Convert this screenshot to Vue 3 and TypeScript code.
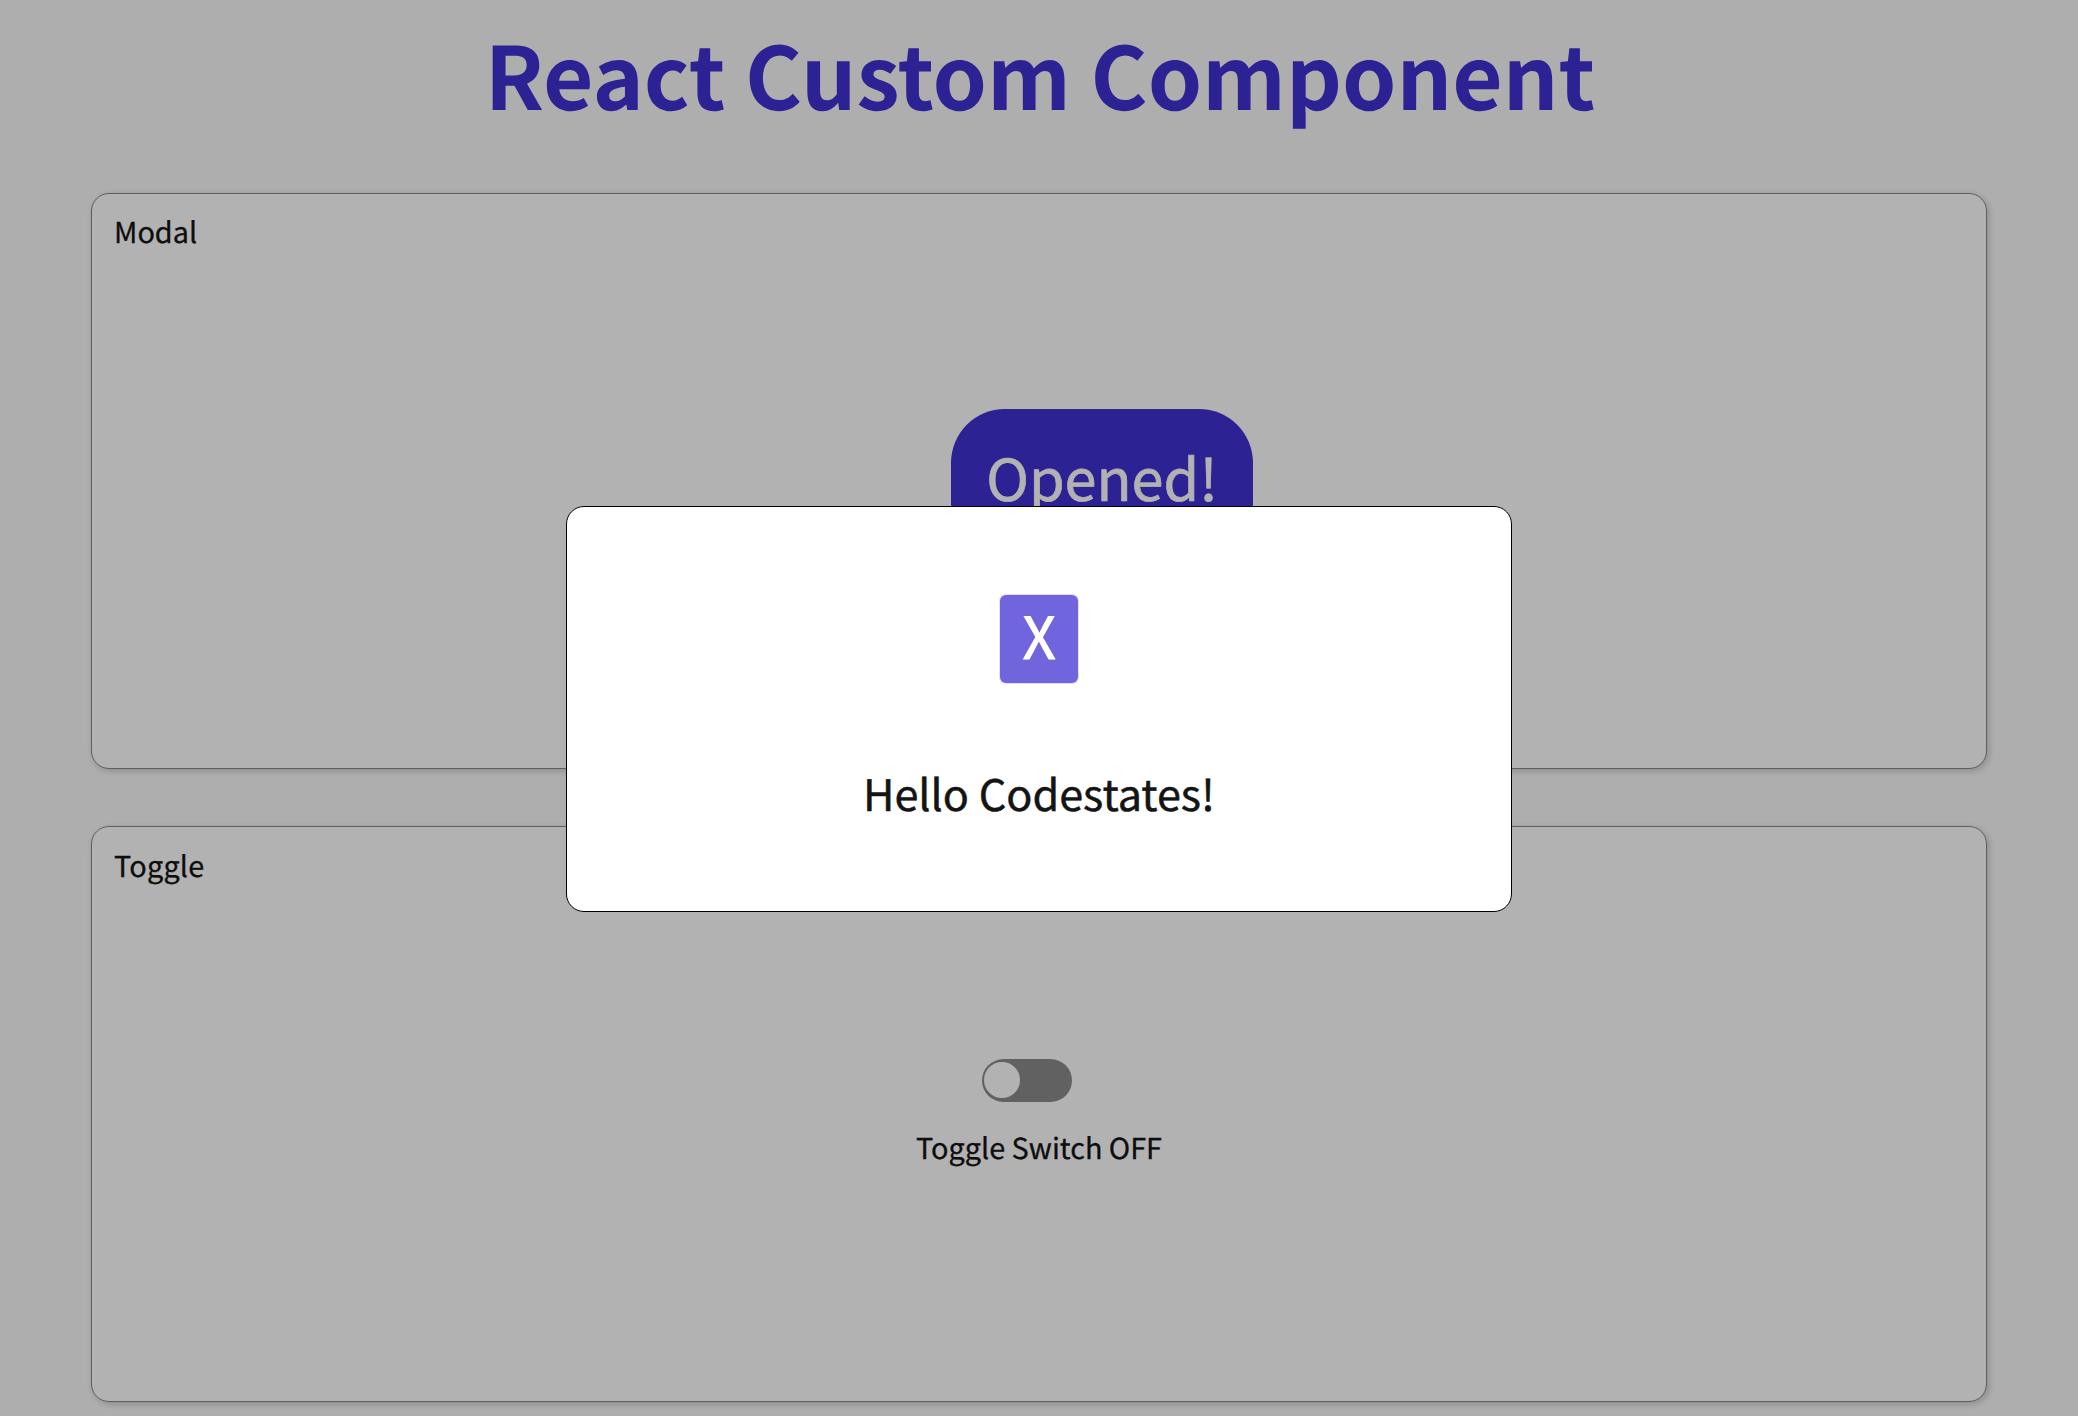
<script setup lang="ts">
import { ref } from 'vue'

const isOpen = ref(true)
const isOn = ref(false)
</script>

<template>
  <div class="page">
    <h1 class="title">React Custom Component</h1>
    <section class="card">
      <div class="label">Modal</div>
      <div class="modal-body">
        <button class="open-btn" @click="isOpen = true">Opened!</button>
      </div>
    </section>
    <section class="card">
      <div class="label low">Toggle</div>
      <div class="toggle-body">
        <div class="switch" :class="{ on: isOn }" @click="isOn = !isOn">
          <div class="knob"></div>
        </div>
        <div class="state">Toggle Switch {{ isOn ? 'ON' : 'OFF' }}</div>
      </div>
    </section>
    <div v-if="isOpen" class="backdrop">
      <div class="dialog">
        <button class="close-btn" @click="isOpen = false">X</button>
        <div class="message">Hello Codestates!</div>
      </div>
    </div>
  </div>
</template>

<style>
body {
  background: #fafafa;
  overflow: hidden;
}
</style>

<style scoped>
.page {
  box-sizing: border-box;
  height: 1416px;
  padding: 0 91px;
  overflow: hidden;
  font-family: 'Noto Sans CJK KR', sans-serif;
  text-rendering: geometricPrecision;
  color: #141414;
}
.title {
  margin: 0;
  height: 193px;
  line-height: 147px;
  font-size: 87px;
  font-weight: 700;
  text-align: center;
  text-indent: 2px;
  color: #4131d3;
}
.card {
  box-sizing: border-box;
  display: flex;
  flex-direction: column;
  height: 576px;
  margin-bottom: 57px;
  border: 1px solid #888;
  border-radius: 18px;
  background: #fff;
  box-shadow: 2px 2px 7px rgba(0, 0, 0, 0.2);
}
.label {
  box-sizing: border-box;
  padding: 16px 0 0 22px;
  height: 61px;
  line-height: 44px;
  font-size: 28.8px;
  -webkit-text-stroke: 0.3px currentColor;
}
.label.low {
  padding-top: 17px;
  letter-spacing: 0.2px;
}
.modal-body {
  display: flex;
  justify-content: center;
  padding: 154px 0 0 126px;
}
.open-btn {
  display: flex;
  justify-content: center;
  width: 302px;
  height: 148px;
  padding: 0;
  border: 0;
  border-radius: 54px;
  background: #4131d3;
  color: #fff;
  font: 400 57.6px/134px 'Noto Sans CJK KR', sans-serif;
  text-rendering: geometricPrecision;
  -webkit-text-stroke: 0.7px currentColor;
}
.toggle-body {
  display: flex;
  flex-direction: column;
  align-items: center;
  padding-top: 171px;
}
.switch {
  box-sizing: border-box;
  display: flex;
  width: 90px;
  height: 43px;
  margin-right: 24px;
  padding: 3px 2px 0;
  border-radius: 22px;
  background: #8b8b8b;
}
.switch.on {
  justify-content: flex-end;
  background: #4131d3;
}
.knob {
  width: 36px;
  height: 36px;
  border-radius: 50%;
  background: #fff;
}
.state {
  margin-top: 24px;
  line-height: 44px;
  font-size: 28.8px;
  -webkit-text-stroke: 0.3px currentColor;
}
.backdrop {
  position: fixed;
  inset: 0;
  display: flex;
  justify-content: center;
  align-items: center;
  padding-top: 2px;
  background: rgba(0, 0, 0, 0.3);
}
.dialog {
  box-sizing: border-box;
  display: flex;
  flex-direction: column;
  align-items: center;
  width: 946px;
  height: 406px;
  border: 1px solid #000;
  border-radius: 18px;
  background: #fff;
}
.close-btn {
  width: 78px;
  height: 88px;
  margin-top: 88px;
  padding: 0 0 10px;
  border: 0;
  border-radius: 6px;
  background: #7065dc;
  box-shadow: 0 0 0 1px rgba(112, 101, 220, 0.2);
  color: #fff;
  font: 400 58px/78px 'Noto Sans CJK KR', sans-serif;
  text-rendering: geometricPrecision;
  -webkit-text-stroke: 0.9px currentColor;
}
.message {
  margin-top: 77px;
  line-height: 66px;
  font-size: 43.2px;
  -webkit-text-stroke: 0.5px currentColor;
}
</style>
